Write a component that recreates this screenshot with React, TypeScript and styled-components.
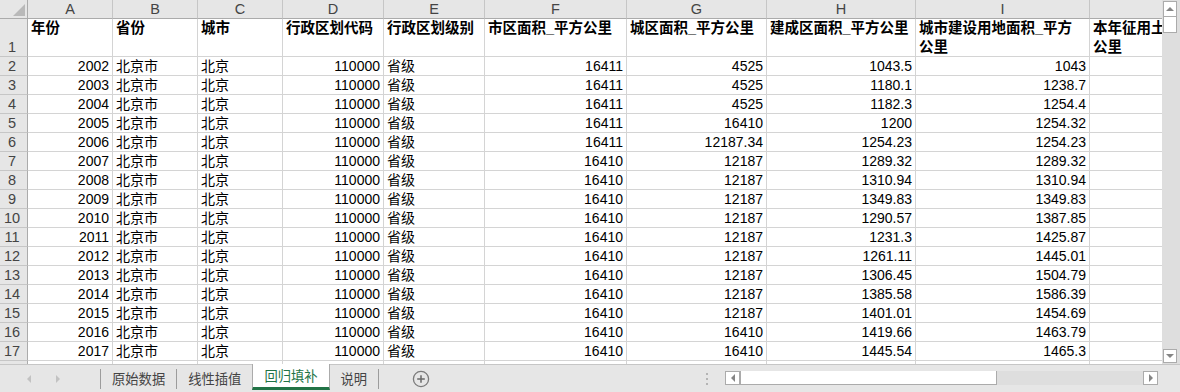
import React from 'react';
import styled, { createGlobalStyle, css } from 'styled-components';

const GlobalStyle = createGlobalStyle`
  html, body {
    margin: 0;
    padding: 0;
    background: #ffffff;
    overflow: hidden;
  }
  body {
    font-family: 'Liberation Sans', 'Noto Sans CJK SC', sans-serif;
  }
`;

const COLS = [85, 85, 85, 101, 101, 142, 140, 149, 174, 174];
const LETTERS = ['A', 'B', 'C', 'D', 'E', 'F', 'G', 'H', 'I', 'J'];
const TITLES = [
  '年份',
  '省份',
  '城市',
  '行政区划代码',
  '行政区划级别',
  '市区面积_平方公里',
  '城区面积_平方公里',
  '建成区面积_平方公里',
  '城市建设用地面积_平方\n公里',
  '本年征用土地面积_平方\n公里',
];

// year, 市区, 城区, 建成区, 建设用地
const DATA: string[][] = [
  ['2002', '16411', '4525', '1043.5', '1043'],
  ['2003', '16411', '4525', '1180.1', '1238.7'],
  ['2004', '16411', '4525', '1182.3', '1254.4'],
  ['2005', '16411', '16410', '1200', '1254.32'],
  ['2006', '16411', '12187.34', '1254.23', '1254.23'],
  ['2007', '16410', '12187', '1289.32', '1289.32'],
  ['2008', '16410', '12187', '1310.94', '1310.94'],
  ['2009', '16410', '12187', '1349.83', '1349.83'],
  ['2010', '16410', '12187', '1290.57', '1387.85'],
  ['2011', '16410', '12187', '1231.3', '1425.87'],
  ['2012', '16410', '12187', '1261.11', '1445.01'],
  ['2013', '16410', '12187', '1306.45', '1504.79'],
  ['2014', '16410', '12187', '1385.58', '1586.39'],
  ['2015', '16410', '12187', '1401.01', '1454.69'],
  ['2016', '16410', '16410', '1419.66', '1463.79'],
  ['2017', '16410', '16410', '1445.54', '1465.3'],
];

const TABS = ['原始数据', '线性插值', '回归填补', '说明'];
const ACTIVE = 2;

type Align = 'left' | 'right';

const toRow = (d: string[]): { v: string; a: Align }[] => [
  { v: d[0], a: 'right' },
  { v: '北京市', a: 'left' },
  { v: '北京', a: 'left' },
  { v: '110000', a: 'right' },
  { v: '省级', a: 'left' },
  { v: d[1], a: 'right' },
  { v: d[2], a: 'right' },
  { v: d[3], a: 'right' },
  { v: d[4], a: 'right' },
  { v: '', a: 'left' },
];

const App: React.FC = () => {
  return (
    <>
      <GlobalStyle />
      <Window>
        <SheetArea>
          <Viewport>
            <Grid>
              <Corner>
                <svg width="12" height="12" viewBox="0 0 12 12">
                  <polygon points="12,0 12,12 0,12" fill="#b9b9b9" />
                </svg>
              </Corner>
              {LETTERS.map((l) => (
                <ColHead key={l}>{l}</ColHead>
              ))}

              <RowHead>1</RowHead>
              {TITLES.map((t) => (
                <TitleCell key={t}>{t}</TitleCell>
              ))}

              {DATA.map((d, i) => (
                <React.Fragment key={d[0]}>
                  <RowHead>{i + 2}</RowHead>
                  {toRow(d).map((c, j) => (
                    <Cell key={j} $align={c.a}>
                      {c.v}
                    </Cell>
                  ))}
                </React.Fragment>
              ))}

              <RowHead>18</RowHead>
              {LETTERS.map((l) => (
                <Cell key={l} $align="left" />
              ))}
            </Grid>
          </Viewport>

          <VScroll>
            <ScrollButton $w={14} $h={16}>
              <Arrow $dir="up" />
            </ScrollButton>
            <Thumb $w={14} $h={16} />
            <ScrollButton $w={14} $h={14} $push>
              <Arrow $dir="down" />
            </ScrollButton>
          </VScroll>
        </SheetArea>

        <TabBar>
          <NavArea>
            <NavArrow $dir="left" />
            <NavArrow $dir="right" />
          </NavArea>
          <Divider />
          {TABS.map((t, i) => (
            <React.Fragment key={t}>
              <SheetTab $active={i === ACTIVE}>{t}</SheetTab>
              {i !== ACTIVE && i + 1 !== ACTIVE && <Divider />}
            </React.Fragment>
          ))}
          <AddSheet>
            <svg width="18" height="18" viewBox="0 0 18 18">
              <circle cx="9" cy="9" r="7.6" fill="none" stroke="#7b7b7b" strokeWidth="1.3" />
              <path d="M9 5.2v7.6M5.2 9h7.6" stroke="#6a6a6a" strokeWidth="1.5" />
            </svg>
          </AddSheet>
          <Spacer />
          <Splitter>
            <i />
            <i />
            <i />
          </Splitter>
          <HScroll>
            <ScrollButton $w={15} $h={14}>
              <Arrow $dir="left" />
            </ScrollButton>
            <Thumb $w={257} $h={14} />
            <ScrollButton $w={15} $h={14} $push>
              <Arrow $dir="right" />
            </ScrollButton>
          </HScroll>
        </TabBar>
      </Window>
    </>
  );
};

const Window = styled.div`
  width: 1180px;
  height: 392px;
  display: flex;
  flex-direction: column;
  background: #ffffff;
  overflow: hidden;
`;

const SheetArea = styled.div`
  display: flex;
  height: 364px;
  flex: none;
`;

const Viewport = styled.div`
  width: 1162px;
  height: 364px;
  overflow: hidden;
  flex: none;
`;

const Grid = styled.div`
  display: grid;
  grid-template-columns: 28px ${COLS.map((w) => `${w}px`).join(' ')};
  grid-template-rows: 19px 38px repeat(17, 19px);
  width: max-content;
  color: #000000;
`;

const headBase = css`
  box-sizing: border-box;
  background: #e6e6e6;
  color: #444444;
  font-size: 14.5px;
`;

const Corner = styled.div`
  ${headBase};
  display: flex;
  align-items: flex-end;
  justify-content: flex-end;
  padding: 0 2px 2px 0;
  border-right: 1px solid #ababab;
  border-bottom: 1px solid #ababab;
`;

const ColHead = styled.div`
  ${headBase};
  text-align: center;
  line-height: 18px;
  border-right: 1px solid #c6c6c6;
  border-bottom: 1px solid #ababab;
`;

const RowHead = styled.div`
  ${headBase};
  display: flex;
  align-items: flex-end;
  justify-content: center;
  line-height: 18px;
  padding-right: 3px;
  border-right: 1px solid #ababab;
  border-bottom: 1px solid #c6c6c6;
`;

const cellBase = css`
  box-sizing: border-box;
  border-right: 1px solid #d4d4d4;
  border-bottom: 1px solid #d4d4d4;
  padding: 0 3px;
  white-space: pre;
  overflow: hidden;
`;

const TitleCell = styled.div`
  ${cellBase};
  font-weight: 700;
  font-size: 14.5px;
  line-height: 19px;
  padding: 0 2px 0 3px;
`;

const Cell = styled.div<{ $align: Align }>`
  ${cellBase};
  font-size: 14px;
  line-height: 19px;
  text-align: ${(p) => p.$align};
`;

const VScroll = styled.div`
  flex: 1;
  display: flex;
  flex-direction: column;
  box-sizing: border-box;
  padding: 1px 3px 1px 1px;
  background: #dedede;
`;

const ScrollButton = styled.div<{ $w: number; $h: number; $push?: boolean }>`
  box-sizing: border-box;
  width: ${(p) => p.$w}px;
  height: ${(p) => p.$h}px;
  flex: none;
  display: flex;
  align-items: center;
  justify-content: center;
  background: #ffffff;
  border: 1px solid #ababab;
  ${(p) => p.$push && 'margin-left: auto; margin-top: auto;'}
`;

const Thumb = styled.div<{ $w: number; $h: number }>`
  box-sizing: border-box;
  width: ${(p) => p.$w}px;
  height: ${(p) => p.$h}px;
  flex: none;
  background: #ffffff;
  border: 1px solid #ababab;
  border-top-width: 0;
  border-left-width: 1px;
`;

type Dir = 'up' | 'down' | 'left' | 'right';

const arrowShape = (dir: Dir, color: string, a: number, b: number) => {
  switch (dir) {
    case 'up':
      return `border-left: ${a}px solid transparent; border-right: ${a}px solid transparent; border-bottom: ${b}px solid ${color};`;
    case 'down':
      return `border-left: ${a}px solid transparent; border-right: ${a}px solid transparent; border-top: ${b}px solid ${color};`;
    case 'left':
      return `border-top: ${a}px solid transparent; border-bottom: ${a}px solid transparent; border-right: ${b}px solid ${color};`;
    default:
      return `border-top: ${a}px solid transparent; border-bottom: ${a}px solid transparent; border-left: ${b}px solid ${color};`;
  }
};

const Arrow = styled.span<{ $dir: Dir }>`
  width: 0;
  height: 0;
  ${(p) => arrowShape(p.$dir, '#858585', 4, 4)}
`;

const TabBar = styled.div`
  flex: 1;
  display: flex;
  align-items: stretch;
  background: #e6e6e6;
  border-top: 1px solid #c6c6c6;
  font-family: 'Liberation Sans', 'Noto Sans CJK SC', sans-serif;
`;

const NavArea = styled.div`
  width: 100px;
  flex: none;
  display: flex;
  align-items: center;
  gap: 25px;
  padding-left: 27px;
  box-sizing: border-box;
`;

const NavArrow = styled.span<{ $dir: Dir }>`
  width: 0;
  height: 0;
  ${(p) => arrowShape(p.$dir, '#c2c2c2', 4, 4)}
`;

const Divider = styled.span`
  width: 1px;
  height: 20px;
  align-self: center;
  background: #9c9c9c;
  flex: none;
`;

const SheetTab = styled.div<{ $active: boolean }>`
  box-sizing: border-box;
  display: flex;
  align-items: center;
  padding: 0 11px;
  font-size: 13.3px;
  color: #444444;
  flex: none;
  ${(p) =>
    p.$active &&
    css`
      background: #ffffff;
      color: #217346;
      margin-top: -1px;
      margin-bottom: 2px;
      border-left: 1px solid #ababab;
      border-right: 1px solid #ababab;
      border-bottom: 3px solid #217346;
    `}
`;

const AddSheet = styled.div`
  margin-left: 33px;
  display: flex;
  align-items: center;
`;

const Spacer = styled.div`
  flex: 1;
`;

const Splitter = styled.div`
  width: 4px;
  display: flex;
  flex-direction: column;
  justify-content: center;
  align-items: center;
  gap: 3px;
  margin-right: 16px;
  & > i {
    width: 2px;
    height: 2px;
    background: #b4b4b4;
  }
`;

const HScroll = styled.div`
  width: 433px;
  height: 14px;
  align-self: center;
  display: flex;
  background: #dedede;
  margin-right: 22px;
  margin-top: -1px;
`;

export default App;
